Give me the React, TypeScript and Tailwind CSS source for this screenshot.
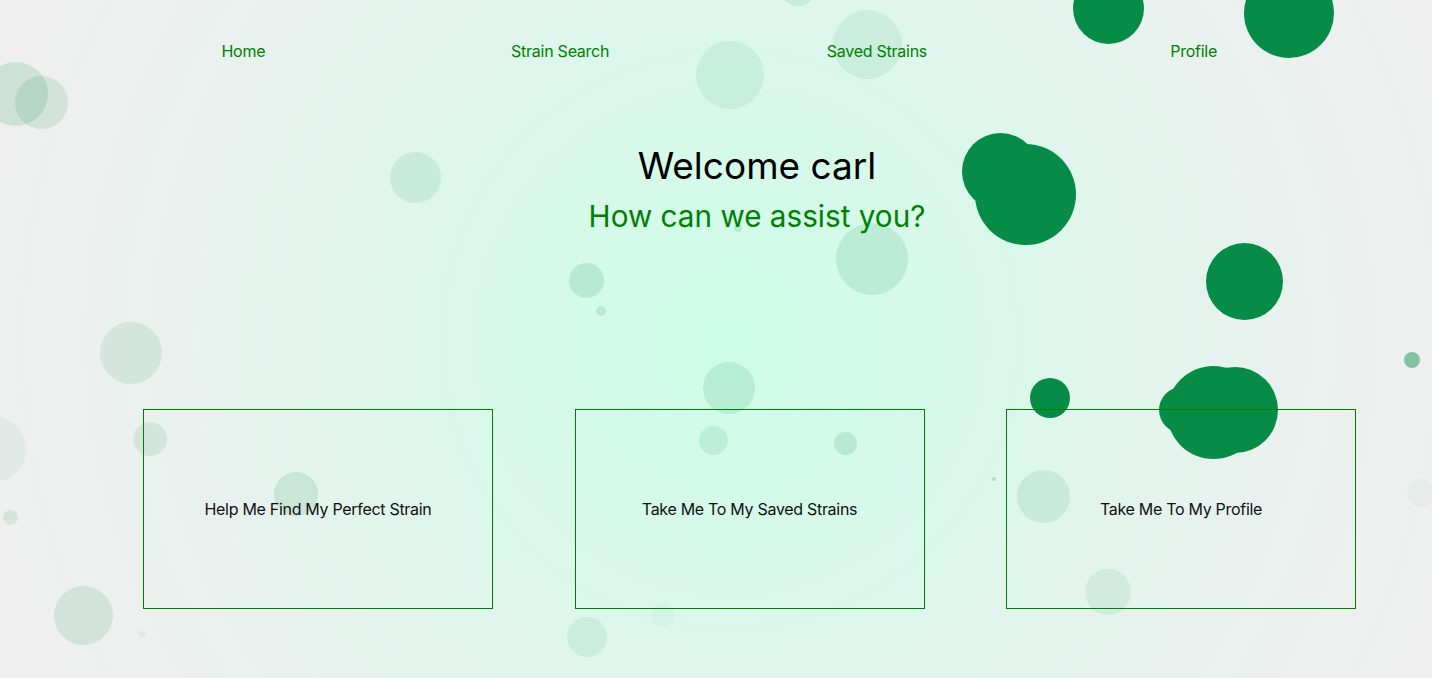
import React from 'react';

type Bubble = { x: number; y: number; d: number; dark?: boolean; o?: number };

// x, y = centre; d = diameter
const bubbles: Bubble[] = [
  { x: 16, y: 94, d: 64, o: 0.14 },
  { x: 41, y: 102, d: 53, o: 0.12 },
  { x: 415, y: 177, d: 51, o: 0.1 },
  { x: 586, y: 280, d: 35, o: 0.14 },
  { x: 601, y: 311, d: 10, o: 0.14 },
  { x: 730, y: 75, d: 68, o: 0.08 },
  { x: 867, y: 44, d: 69, o: 0.08 },
  { x: 798, y: -12, d: 36, o: 0.1 },
  { x: 872, y: 259, d: 72, o: 0.12 },
  { x: 738, y: 228, d: 8, o: 0.15 },
  { x: 131, y: 353, d: 62, o: 0.1 },
  { x: -7, y: 449, d: 66, o: 0.05 },
  { x: 150, y: 439, d: 34, o: 0.1 },
  { x: 296, y: 494, d: 44, o: 0.12 },
  { x: 10, y: 517, d: 15, o: 0.1 },
  { x: 83, y: 615, d: 59, o: 0.12 },
  { x: 142, y: 634, d: 6, o: 0.08 },
  { x: 587, y: 637, d: 40, o: 0.08 },
  { x: 729, y: 388, d: 52, o: 0.12 },
  { x: 713, y: 440, d: 29, o: 0.1 },
  { x: 845, y: 443, d: 23, o: 0.14 },
  { x: 1043, y: 496, d: 53, o: 0.1 },
  { x: 1108, y: 592, d: 46, o: 0.08 },
  { x: 1412, y: 360, d: 16, o: 0.45 },
  { x: 1421, y: 493, d: 28, o: 0.03 },
  { x: 663, y: 615, d: 24, o: 0.03 },
  { x: 994, y: 479, d: 4, o: 0.2 },
  { x: 1108, y: 8, d: 71, dark: true },
  { x: 1289, y: 13, d: 90, dark: true },
  { x: 1000, y: 171, d: 77, dark: true },
  { x: 1025, y: 194, d: 101, dark: true },
  { x: 1244, y: 281, d: 77, dark: true },
  { x: 1050, y: 398, d: 40, dark: true },
  { x: 1182, y: 410, d: 46, dark: true },
  { x: 1213, y: 412, d: 93, dark: true },
  { x: 1235, y: 410, d: 86, dark: true },
];

const navLinks = ['Home', 'Strain Search', 'Saved Strains', 'Profile'];
const cards = ['Help Me Find My Perfect Strain', 'Take Me To My Saved Strains', 'Take Me To My Profile'];

export default function App() {
  return (
    <div className="relative h-[678px] w-full overflow-hidden bg-[radial-gradient(circle_at_51%_50%,#cdfde7_0px,#d8f8ea_240px,#e0f5ec_380px,#e9f1ee_560px,#efefef_760px)] font-['Inter','Liberation_Sans',sans-serif]">
      {/* bubbles */}
      <div className="pointer-events-none absolute inset-0">
        {bubbles.map((b, i) => (
          <div
            key={i}
            className="absolute rounded-full bg-[#068c46]"
            style={{
              left: b.x - b.d / 2,
              top: b.y - b.d / 2,
              width: b.d,
              height: b.d,
              opacity: b.dark ? 1 : b.o,
            }}
          />
        ))}
      </div>

      <div className="relative">
        {/* Nav */}
        <nav className="grid grid-cols-4 pl-[85px] pr-[80px] pt-[40px] text-center">
          {navLinks.map((l) => (
            <a key={l} className="cursor-pointer text-[16px] leading-[22px] tracking-[-0.25px] text-[#008000]">
              {l}
            </a>
          ))}
        </nav>

        {/* Hero */}
        <div className="mt-[80px] flex flex-col items-center pl-[82px]">
          <h1 className="text-[37px] leading-[48px] font-normal text-black">Welcome carl</h1>
          <h2 className="mt-[7px] text-[29.7px] leading-[38px] font-normal text-[#008000]">How can we assist you?</h2>
        </div>

        {/* Cards */}
        <div className="mt-[174px] flex gap-[81.5px] pl-[143px]">
          {cards.map((c) => (
            <button
              key={c}
              className="flex h-[200px] w-[350px] items-center justify-center border border-[#008000] text-[16px] tracking-[-0.3px] text-[#111]"
            >
              {c}
            </button>
          ))}
        </div>
      </div>
    </div>
  );
}
